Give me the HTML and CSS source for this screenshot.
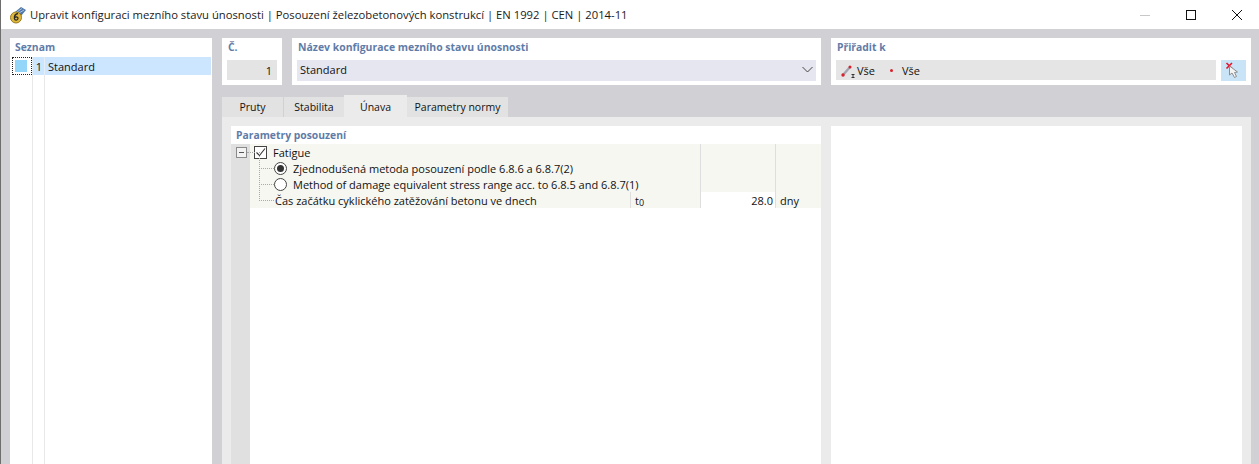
FILE: index.html
```html
<!DOCTYPE html>
<html lang="cs">
<head>
    <meta charset="UTF-8">
    <title>Upravit konfiguraci</title>
    <link rel="stylesheet" href="styles.css">
</head>
<body>
    <div class="window">
        <!-- Titulek okna -->
        <div class="titlebar">
            <svg class="app-icon" width="18" height="18" viewBox="0 0 18 18">
                <path d="M6 6 L12 1 L17 4 L12 10 Z" fill="#4f77a8"/>
                <path d="M8 6 L13 2.5 M10 7 L15 4" stroke="#a9c3de" stroke-width="1"/>
                <circle cx="7" cy="11.5" r="5.5" fill="#e0b83a" stroke="#9a7c22" stroke-width="1"/>
                <path d="M9 7.5 C6.5 8 5.2 10 5.4 12.5 C5.6 14.6 8.8 14.6 9 12.5 C9.1 10.6 6.6 10.6 5.6 11.8" fill="none" stroke="#2a2a2a" stroke-width="1.3"/>
            </svg>
            <span class="title-text">Upravit konfiguraci mezního stavu únosnosti | Posouzení železobetonových konstrukcí | EN 1992 | CEN | 2014-11</span>
            <div class="win-controls">
                <span class="win-btn"><svg width="12" height="12" viewBox="0 0 12 12"><path d="M1 6.5 H11" stroke="#c8c8c8"/></svg></span>
                <span class="win-btn"><svg width="12" height="12" viewBox="0 0 12 12"><rect x="1.5" y="1.5" width="9" height="9" fill="none" stroke="#111"/></svg></span>
                <span class="win-btn"><svg width="12" height="12" viewBox="0 0 12 12"><path d="M1 1 L11 11 M11 1 L1 11" stroke="#111"/></svg></span>
            </div>
        </div>

        <div class="content">
            <!-- Seznam -->
            <div class="sidebar">
                <div class="group-title sidebar-title">Seznam</div>
                <div class="list-row">
                    <span class="list-swatch-cell"><span class="list-swatch"></span></span>
                    <span class="list-num">1</span>
                    <span class="list-name">Standard</span>
                </div>
                <div class="list-rest">
                    <span class="list-col-a"></span>
                    <span class="list-col-b"></span>
                </div>
            </div>

            <div class="main">
                <div class="top-row">
                    <div class="card card-no">
                        <div class="group-title">Č.</div>
                        <div class="field field-no">1</div>
                    </div>
                    <div class="card card-name">
                        <div class="group-title">Název konfigurace mezního stavu únosnosti</div>
                        <div class="field field-name">
                            <span>Standard</span>
                            <svg width="11" height="7" viewBox="0 0 11 7"><path d="M0.5 1 L5.5 6 L10.5 1" fill="none" stroke="#444"/></svg>
                        </div>
                    </div>
                    <div class="card card-assign">
                        <div class="group-title">Přiřadit k</div>
                        <div class="assign-row">
                            <div class="field field-assign">
                                <svg class="member-icon" width="15" height="14" viewBox="0 0 15 14">
                                    <path d="M2 11 L9 3" stroke="#a4a4b0" stroke-width="2.4"/>
                                    <circle cx="2" cy="11" r="1.7" fill="#d9202c"/>
                                    <circle cx="9" cy="3" r="1.5" fill="#d9202c"/>
                                    <path d="M10.5 10.5 H13.5 M12 10.5 V13.5 M10.5 13.5 H13.5" stroke="#333" stroke-width="1"/>
                                </svg>
                                <span class="assign-label">Vše</span>
                                <span class="node-dot"></span>
                                <span>Vše</span>
                            </div>
                            <div class="pick-btn">
                                <svg width="17" height="17" viewBox="0 0 17 17">
                                    <path d="M1.5 1 L7 6.5 M7 1 L1.5 6.5" stroke="#e3142a" stroke-width="1.6"/>
                                    <path d="M4.5 4 L4.5 13 L7 11 L9.5 15.5 L11.5 14.5 L9.5 10.5 L12.5 10 Z" fill="#f4f4f4" stroke="#8d8d8d"/>
                                </svg>
                            </div>
                        </div>
                    </div>
                </div>

                <div class="tabs">
                    <div class="tab tab-pruty">Pruty</div>
                    <div class="tab tab-stab">Stabilita</div>
                    <div class="tab tab-active">Únava</div>
                    <div class="tab tab-norm">Parametry normy</div>
                </div>

                <div class="tab-panel">
                    <div class="params">
                        <div class="group-title params-title">Parametry posouzení</div>
                        <div class="tree-wrap">
                            <div class="gutter"></div>
                            <div class="tree-table">
                                <div class="row row-root">
                                    <div class="cell cell-label">
                                        <span class="expander"></span>
                                        <span class="checkbox">
                                            <svg width="11" height="11" viewBox="0 0 11 11"><path d="M1.5 5.5 L4.5 8.5 L10 1.5" fill="none" stroke="#333" stroke-width="1.1"/></svg>
                                        </span>
                                        <span class="cell-text">Fatigue</span>
                                    </div>
                                    <div class="cell"></div>
                                    <div class="cell"></div>
                                </div>
                                <div class="row row-option">
                                    <div class="cell cell-label">
                                        <span class="radio radio-on"></span>
                                        <span class="cell-text">Zjednodušená metoda posouzení podle 6.8.6 a 6.8.7(2)</span>
                                    </div>
                                    <div class="cell"></div>
                                    <div class="cell"></div>
                                </div>
                                <div class="row row-option">
                                    <div class="cell cell-label">
                                        <span class="radio"></span>
                                        <span class="cell-text">Method of damage equivalent stress range acc. to 6.8.5 and 6.8.7(1)</span>
                                    </div>
                                    <div class="cell"></div>
                                    <div class="cell"></div>
                                </div>
                                <div class="row row-param">
                                    <div class="cell cell-name"><span class="cell-text">Čas začátku cyklického zatěžování betonu ve dnech</span></div>
                                    <div class="cell cell-sym"><span class="cell-text">t<sub>0</sub></span></div>
                                    <div class="cell cell-value"><span class="cell-text">28.0</span></div>
                                    <div class="cell cell-unit"><span class="cell-text">dny</span></div>
                                </div>
                            </div>
                        </div>
                    </div>
                    <div class="preview"></div>
                </div>
            </div>
        </div>
    </div>
</body>
</html>
```

FILE: styles.css
```css
* {
    margin: 0;
    padding: 0;
    box-sizing: border-box;
}

html, body {
    height: 464px;
    overflow: hidden;
}

body {
    font-family: "Open Sans", "Noto Sans", Arial, sans-serif;
    font-size: 11px;
    color: #111;
    background: #d1d0d5;
}

.window {
    display: flex;
    flex-direction: column;
    height: 464px;
    border-left: 1px solid #6e6e6e;
}

/* Titulek */
.titlebar {
    display: flex;
    align-items: center;
    height: 29px;
    flex-shrink: 0;
    background: #fff;
    padding-left: 8px;
}

.app-icon {
    margin-right: 3px;
}

.title-text {
    font-size: 11.25px;
    color: #1b1b1b;
    white-space: nowrap;
}

.win-controls {
    display: flex;
    margin-left: auto;
    padding-right: 16px;
    gap: 34px;
}

.win-btn {
    display: flex;
    width: 12px;
    height: 12px;
}

/* Hlavni obsah */
.content {
    display: flex;
    flex: 1;
    gap: 10px;
    padding: 9px 8px 0 9px;
    min-height: 0;
}

.group-title {
    font-size: 10.35px;
    font-weight: 700;
    color: #5f7ca8;
    line-height: 14px;
}

/* Seznam */
.sidebar {
    display: flex;
    flex-direction: column;
    width: 202px;
    flex-shrink: 0;
    background: #fff;
    padding: 2px 1px 0 2px;
}

.sidebar-title {
    padding: 0 0 3px 3px;
}

.list-row {
    display: flex;
    align-items: center;
    height: 18px;
    background: #cce6ff;
    color: #111;
}

.list-swatch-cell {
    display: flex;
    align-items: center;
    justify-content: center;
    width: 20px;
    height: 18px;
    background: #fff;
    border: 1px dotted #222;
}

.list-swatch {
    width: 12px;
    height: 12px;
    margin-right: 2px;
    background: #94d6fa;
}

.list-num {
    width: 13px;
    height: 18px;
    line-height: 19px;
    padding-right: 2px;
    text-align: right;
    border-left: 1px solid #e6eef5;
    border-right: 1px solid #e6eef5;
}

.list-name {
    padding: 1px 0 0 3px;
}

.list-rest {
    display: flex;
    flex: 1;
}

.list-col-a {
    width: 13px;
    margin-left: 20px;
    border-left: 1px solid #e8e8e8;
    border-right: 1px solid #e8e8e8;
}

.main {
    display: flex;
    flex-direction: column;
    flex: 1;
    min-width: 0;
}

/* Horni radek */
.top-row {
    display: flex;
    gap: 10px;
    height: 47px;
    flex-shrink: 0;
}

.card {
    background: #fff;
    padding: 2px 5px 0;
}

.card .group-title {
    height: 20px;
    padding-left: 1px;
}

.card-no {
    width: 60px;
}

.card-name {
    width: 529px;
}

.card-name .group-title {
    font-size: 10.45px;
}

.card-assign {
    flex: 1;
}

.field {
    display: flex;
    align-items: center;
    height: 20px;
}

.field-no {
    justify-content: flex-end;
    padding: 1px 5px 0 0;
    background: #e4e4e4;
}

.field-name {
    justify-content: space-between;
    height: 21px;
    padding: 0 3px 2px;
    background: #e6e6f0;
}

.assign-row {
    display: flex;
    gap: 5px;
}

.field-assign {
    flex: 1;
    padding: 1px 0 0 5px;
    background: #e5e5e5;
}

.member-icon {
    margin-right: 1px;
}

.assign-label {
    margin-right: 15px;
}

.node-dot {
    width: 3px;
    height: 3px;
    margin-right: 9px;
    border-radius: 50%;
    background: #d9202c;
}

.pick-btn {
    display: flex;
    align-items: center;
    justify-content: center;
    width: 25px;
    height: 21px;
    background: #c9e3f7;
}

/* Zalozky */
.tabs {
    display: flex;
    align-items: flex-end;
    height: 22px;
    margin-top: 10px;
    flex-shrink: 0;
    font-size: 10.5px;
}

.tab {
    display: flex;
    align-items: center;
    justify-content: center;
    height: 20px;
    background: #e2e2e2;
}

.tab-pruty {
    width: 61px;
    margin-right: 1px;
}

.tab-stab {
    width: 60px;
}

.tab-active {
    width: 63px;
    height: 22px;
    padding-top: 2px;
    background: #ebebeb;
}

.tab-norm {
    width: 101px;
}

.tab-panel {
    display: flex;
    flex: 1;
    gap: 10px;
    padding: 9px 9px 0;
    background: #ebebeb;
    min-height: 0;
}

/* Parametry */
.params {
    display: flex;
    flex-direction: column;
    width: 590px;
    background: #fff;
}

.params-title {
    height: 18px;
    padding: 2px 0 0 5px;
}

.tree-wrap {
    display: flex;
    flex: 1;
}

.gutter {
    width: 19px;
    background: #e0e0e0;
}

.tree-table {
    flex: 1;
}

.row {
    display: grid;
    grid-template-columns: 450px 75px 1fr;
    height: 16px;
    background: #f7f7f2;
}

.row-param {
    grid-template-columns: 380px 70px 75px 1fr;
}

.cell {
    display: flex;
    align-items: center;
    border-left: 1px solid #dedede;
    white-space: nowrap;
}

.cell-text {
    padding-top: 1px;
}

.cell-label {
    position: relative;
    border-left: none;
}

.row-root .cell-label {
    padding-left: 4px;
}

.row-option .cell-label {
    padding-left: 24px;
}

.row-param .cell-name {
    position: relative;
    padding-left: 25px;
    border-left: none;
}

/* Teckovane spojnice stromu */
.row-option .cell-label::before,
.row-param .cell-name::before {
    content: '';
    position: absolute;
    left: 9px;
    top: -8px;
    width: 14px;
    height: 16px;
    border-left: 1px dotted #aaa;
    border-bottom: 1px dotted #aaa;
}

.expander {
    position: absolute;
    left: -14px;
    top: 3px;
    width: 11px;
    height: 11px;
    border: 1px solid #8a8a8a;
    background: #f2f2f2;
}

.expander::before {
    content: '';
    position: absolute;
    left: 2px;
    top: 4px;
    width: 5px;
    height: 1px;
    background: #555;
}

.expander::after {
    content: '';
    position: absolute;
    left: 10px;
    top: 4px;
    width: 8px;
    border-top: 1px dotted #aaa;
}

.checkbox {
    display: flex;
    align-items: center;
    justify-content: center;
    width: 13px;
    height: 13px;
    margin-right: 6px;
    background: #fff;
    border: 1px solid #444;
}

.radio {
    position: relative;
    width: 13px;
    height: 13px;
    margin-right: 6px;
    flex-shrink: 0;
    border: 1px solid #444;
    border-radius: 50%;
    background: #fff;
}

.radio-on::after {
    content: '';
    position: absolute;
    left: 2px;
    top: 2px;
    width: 7px;
    height: 7px;
    border-radius: 50%;
    background: #333;
}

.cell-sym {
    padding-left: 4px;
}

.cell-sym sub {
    font-size: 9px;
    vertical-align: -1px;
    line-height: 0;
}

.cell-value {
    justify-content: flex-end;
    padding-right: 2px;
    background: #fff;
}

.cell-unit {
    padding-left: 4px;
}

.preview {
    flex: 1;
    background: #fff;
}
```
